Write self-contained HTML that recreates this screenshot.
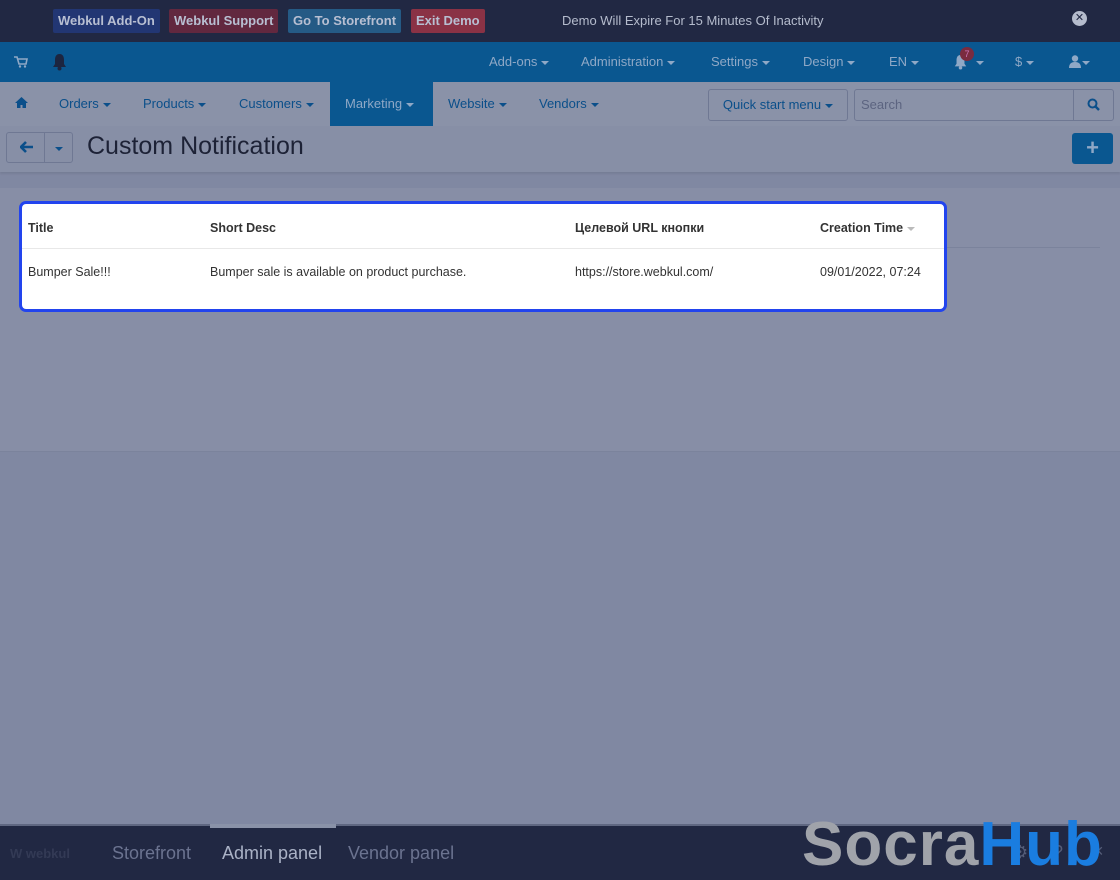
<!DOCTYPE html>
<html><head><meta charset="utf-8"><style>
*{margin:0;padding:0;box-sizing:border-box}
body{width:1120px;height:880px;overflow:hidden;background:#8088a2;font-family:"Liberation Sans","DejaVu Sans",sans-serif;position:relative}
.abs{position:absolute}
.top{left:0;top:0;width:1120px;height:42px;background:#212843}
.btn{top:9px;height:24px;color:#b8bfd2;font-weight:bold;font-size:13px;line-height:24px;padding:0 5px;border-radius:2px}
.nav{left:0;top:42px;width:1120px;height:40px;background:#0a5790;color:#8fa8c6;font-size:13px}
.nav span{position:absolute;top:12px}
.menu{left:0;top:82px;width:1120px;height:44px;background:#8a92a8;color:#0b4f8a;font-size:13px}
.menu span{position:absolute;top:14px}
.car{display:inline-block;width:0;height:0;border-left:4px solid transparent;border-right:4px solid transparent;border-top:4px solid currentColor;vertical-align:middle;margin-left:4px}
.tbar{left:0;top:126px;width:1120px;height:46px;background:#878fa6;box-shadow:0 2px 2px rgba(0,0,0,.08)}
.panel{left:0;top:188px;width:1120px;height:264px;background:#878ea6;border-bottom:1px solid #7b839c}
.card{left:19px;top:201px;width:928px;height:111px;background:#fff;border:3px solid #2244ee;border-radius:7px;font-size:12.5px;color:#333}
.card b{position:absolute;top:17px}
.card i{font-style:normal;position:absolute;top:61px}
.bot{left:0;top:824px;width:1120px;height:56px;background:#212843;border-top:2px solid #5f6781}
.bot span{position:absolute;top:17px;font-size:18px;color:#6b7390}
</style></head><body>
<div class="abs top">
<div class="abs btn" style="left:53px;background:#223673">Webkul Add-On</div>
<div class="abs btn" style="left:169px;background:#62283f">Webkul Support</div>
<div class="abs btn" style="left:288px;background:#255a85">Go To Storefront</div>
<div class="abs btn" style="left:411px;background:#8a3245">Exit Demo</div>
<div class="abs" style="left:562px;top:13px;color:#b5bccd;font-size:13px">Demo Will Expire For 15 Minutes Of Inactivity</div>
<div class="abs" style="left:1072px;top:11px;width:15px;height:15px;border-radius:50%;background:#b5bccd;color:#212843;font-size:11px;font-weight:bold;text-align:center;line-height:15px">✕</div>
</div>
<div class="abs nav">
<svg class="abs" style="left:14px;top:14px" width="14" height="12" viewBox="0 0 14 12"><path d="M0 1h3l2 7h7l1-5H4" fill="none" stroke="#8fa8c6" stroke-width="1.6"/><circle cx="6" cy="10.5" r="1.2" fill="#8fa8c6"/><circle cx="11" cy="10.5" r="1.2" fill="#8fa8c6"/></svg>
<svg class="abs" style="left:51px;top:11px" width="17" height="18" viewBox="0 0 17 18"><path d="M8.5 1C5 1 4 4 4 7v4l-2 3h13l-2-3V7c0-3-1-6-4.5-6z" fill="#1c2540"/><circle cx="8.5" cy="15.5" r="2" fill="#1c2540"/></svg>
<span style="left:489px">Add-ons<i class="car"></i></span>
<span style="left:581px">Administration<i class="car"></i></span>
<span style="left:711px">Settings<i class="car"></i></span>
<span style="left:803px">Design<i class="car"></i></span>
<span style="left:889px">EN<i class="car"></i></span>
<svg class="abs" style="left:953px;top:12px" width="15" height="16" viewBox="0 0 17 18"><path d="M8.5 1C5 1 4 4 4 7v4l-2 3h13l-2-3V7c0-3-1-6-4.5-6z" fill="#8fa8c6"/><circle cx="8.5" cy="15.5" r="2" fill="#8fa8c6"/></svg>
<div class="abs" style="left:960px;top:5px;width:14px;height:14px;border-radius:50%;background:#7a2b3f;color:#c7b;font-size:9px;text-align:center;line-height:14px">7</div>
<span style="left:972px"><i class="car"></i></span>
<span style="left:1015px">$<i class="car"></i></span>
<svg class="abs" style="left:1069px;top:13px" width="12" height="13" viewBox="0 0 12 13"><circle cx="6" cy="3.5" r="3.2" fill="#8fa8c6"/><path d="M0 13c0-4 2-6 6-6s6 2 6 6z" fill="#8fa8c6"/></svg>
<span style="left:1078px"><i class="car"></i></span>
</div>
<div class="abs menu">
<svg class="abs" style="left:15px;top:15px" width="13" height="11" viewBox="0 0 13 11"><path d="M6.5 0L0 6h2v5h3.5V8h2v3H11V6h2z" fill="#0b4f8a"/></svg>
<span style="left:59px">Orders<i class="car"></i></span>
<span style="left:143px">Products<i class="car"></i></span>
<span style="left:239px">Customers<i class="car"></i></span>
<div class="abs" style="left:330px;top:0;width:103px;height:44px;background:#0a5790"></div>
<span style="left:345px;color:#8fa8c6">Marketing<i class="car"></i></span>
<span style="left:448px">Website<i class="car"></i></span>
<span style="left:539px">Vendors<i class="car"></i></span>
<div class="abs" style="left:708px;top:7px;width:140px;height:32px;border:1px solid #6f7893;border-radius:3px;background:#8a92a8;color:#0b4f8a;text-align:center;line-height:30px">Quick start menu<i class="car"></i></div>
<div class="abs" style="left:854px;top:7px;width:260px;height:32px;border:1px solid #6f7893;border-radius:3px;background:#8a92a8;color:#5c6480;padding-left:6px;line-height:30px">Search</div>
<div class="abs" style="left:1073px;top:8px;width:1px;height:30px;background:#6f7893"></div>
<svg class="abs" style="left:1087px;top:16px" width="13" height="13" viewBox="0 0 13 13"><circle cx="5.5" cy="5.5" r="4" fill="none" stroke="#0b4f8a" stroke-width="2"/><path d="M8.5 8.5l3.5 3.5" stroke="#0b4f8a" stroke-width="2.4"/></svg>
</div>
<div class="abs tbar">
<div class="abs" style="left:6px;top:6px;width:67px;height:31px;border:1px solid #6f7893;border-radius:3px"></div>
<div class="abs" style="left:44px;top:7px;width:1px;height:29px;background:#6f7893"></div>
<svg class="abs" style="left:20px;top:15px" width="13" height="12" viewBox="0 0 13 12"><path d="M6 1L1 6l5 5M1 6h12" fill="none" stroke="#0b4f8a" stroke-width="2.6"/></svg>
<div class="abs" style="left:55px;top:14px;color:#0b4f8a"><i class="car" style="margin:0"></i></div>
<div class="abs" style="left:87px;top:6px;font-size:25px;color:#1d2236">Custom Notification</div>
<div class="abs" style="left:1072px;top:7px;width:41px;height:31px;background:#0a5790;border-radius:3px;color:#8fa8c6;text-align:center;font-size:22px;font-weight:bold;line-height:30px">+</div>
</div>
<div class="abs panel"><div class="abs" style="left:940px;top:59px;width:160px;height:1px;background:#7b839c"></div></div>
<div class="abs card">
<b style="left:6px">Title</b><b style="left:188px">Short Desc</b><b style="left:553px">Целевой URL кнопки</b><b style="left:798px">Creation Time <i class="car" style="position:static;color:#bbb;margin-left:0"></i></b>
<div class="abs" style="left:0;top:44px;width:922px;height:1px;background:#e8e8e8"></div>
<i style="left:6px">Bumper Sale!!!</i><i style="left:188px">Bumper sale is available on product purchase.</i><i style="left:553px">https://store.webkul.com/</i><i style="left:798px">09/01/2022, 07:24</i>
</div>
<div class="abs bot">
<div class="abs" style="left:210px;top:-2px;width:126px;height:4px;background:#8a92a8"></div>
<span style="left:10px;font-size:13px;color:#333a55;top:20px;font-weight:bold">W webkul</span>
<span style="left:112px">Storefront</span>
<span style="left:222px;color:#aab2c6">Admin panel</span>
<span style="left:348px">Vendor panel</span>
<span style="left:1012px;top:16px;color:#555d78">⚙</span>
<span style="left:1053px;top:16px;color:#555d78">?</span>
<span style="left:1093px;top:15px;color:#555d78">×</span>
<div class="abs" style="left:802px;top:-14px;font-size:62px;font-weight:bold;letter-spacing:1px;color:#a0a3aa;line-height:66px">Socra<span style="position:static;font-size:62px;color:#1a7de0">Hub</span></div>
</div>
</body></html>
